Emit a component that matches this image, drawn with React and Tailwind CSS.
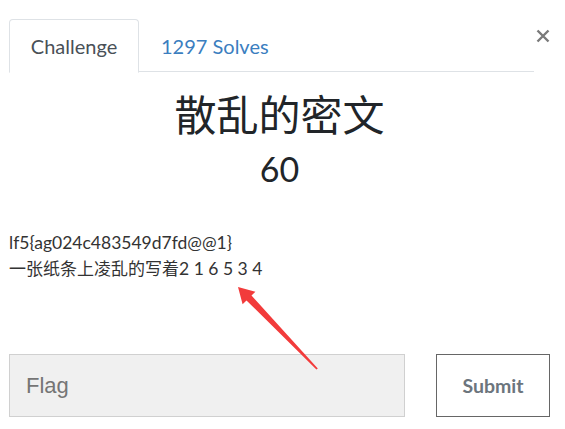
export default function App() {
  return (
    <div className="relative w-[565px] h-[429px] bg-white overflow-hidden" style={{ fontFamily: "Lato, 'Noto Sans CJK SC', sans-serif" }}>
      <div className="flex items-start pt-[19px]">
        <div className="ml-[9px] w-[525px] flex border-b border-[#dee2e6] h-[53px]">
          <div className="w-[130px] h-[54px] -mb-px border border-[#dee2e6] border-b-white rounded-t-[4px] bg-white flex items-center justify-center text-[20px] text-[#495057]">
            Challenge
          </div>
          <div className="pl-[22px] flex items-center text-[20px] text-[#3b7ebf] h-[53px]">
            1297 Solves
          </div>
        </div>
        <div className="ml-[2px] mt-[10px] w-[14px] h-[14px]">
          <svg width="14" height="14" viewBox="0 0 14 14">
            <path d="M1.5 1.5 L12.5 12.5 M12.5 1.5 L1.5 12.5" stroke="#7a7a7a" strokeWidth="2.4" />
          </svg>
        </div>
      </div>

      <div className="w-[541px] ml-[9px] flex flex-col items-center">
        <div className="mt-[15px] text-[42px] leading-[52px] text-[#212529]" style={{ fontFamily: "'Noto Sans CJK SC', sans-serif" }}>
          散乱的密文
        </div>
        <div className="mt-[10px] text-[34px] leading-[40px] text-[#212529]">60</div>
      </div>

      <div className="ml-[9px] mt-[41px] text-[17.5px] leading-[26px] text-[#333]">
        <div>lf5{"{"}ag024c483549d7fd@@1{"}"}</div>
        <div><span className="text-[17px]">一张纸条上凌乱的写着</span>2 1 6 5 3 4</div>
      </div>

      <div className="ml-[9px] mt-[72px] flex">
        <div className="w-[396px] h-[63px] bg-[#f0f0f0] border border-[#d0d0d0] flex items-center pl-[16px] text-[22px] text-[#757575]" style={{ fontFamily: "'Liberation Sans', Arial, sans-serif" }}>
          Flag
        </div>
        <div className="ml-[31px] w-[114px] h-[63px] border border-[#666] flex items-center justify-center text-[19.5px] font-bold text-[#6c757d]">
          Submit
        </div>
      </div>

      <svg className="absolute left-0 top-0 pointer-events-none" width="565" height="429" viewBox="0 0 565 429">
        <polygon points="238,287 255.4,291.7 251.5,295.6 317.8,368.4 316.4,369.6 246.5,300.4 242.6,304.3" fill="#f23b3b" />
      </svg>
    </div>
  );
}
